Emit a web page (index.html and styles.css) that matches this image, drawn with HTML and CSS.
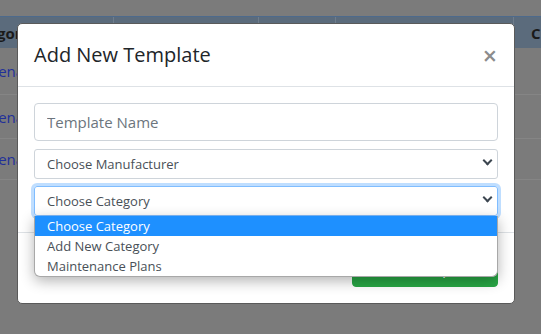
FILE: index.html
```html
<!DOCTYPE html>
<html lang="en">
<head>
    <meta charset="UTF-8">
    <meta name="viewport" content="width=device-width, initial-scale=1.0">
    <title>Templates</title>
    <link rel="stylesheet" href="styles.css">
</head>
<body>

    <div class="page">
        <div class="grid">
            <div class="grid-row grid-head">
                <div class="cell col-a">Category</div>
                <div class="cell col-b">Name</div>
                <div class="cell col-c">Type</div>
                <div class="cell col-d">Manufacturer</div>
                <div class="cell col-e">Created</div>
            </div>
            <div class="grid-row row-1">
                <div class="cell col-a"><a href="#">Maintenance</a></div>
            </div>
            <div class="grid-row row-2">
                <div class="cell col-a"><a href="#">Maintenance</a></div>
            </div>
            <div class="grid-row row-3">
                <div class="cell col-a"><a href="#">Maintenance</a></div>
            </div>
        </div>
    </div>

    <div class="modal">
        <div class="modal-header">
            <h5 class="modal-title">Add New Template</h5>
            <button class="close" type="button">&times;</button>
        </div>
        <div class="modal-body">
            <input class="form-control" type="text" placeholder="Template Name">
            <div class="select">Choose Manufacturer<span class="chev"></span></div>
            <div class="select-wrap">
                <div class="select focused">Choose Category<span class="chev"></span></div>
                <ul class="dropdown">
                    <li class="selected">Choose Category</li>
                    <li>Add New Category</li>
                    <li>Maintenance Plans</li>
                </ul>
            </div>
        </div>
        <div class="modal-footer">
            <button class="btn-success" type="button">Save Template</button>
        </div>
    </div>

</body>
</html>
```

FILE: styles.css
```css
body {
    margin: 0;
    background-color: #7b7b7b;
    font-family: "Open Sans", "Noto Sans", Arial, sans-serif;
    overflow: hidden;
    height: 334px;
}
.page {
    padding-top: 16px;
}
.grid {
    margin-left: -48px;
    width: 640px;
}
.grid-row {
    display: flex;
    border-bottom: 1px solid #858585;
}
.grid-head {
    height: 31px;
    background-color: #5b6b7c;
    border-top: 1px solid #4d6a8c;
    border-bottom: 0;
    color: #1a1a1a;
    font-weight: bold;
    font-size: 15px;
}
.cell {
    box-sizing: border-box;
    padding: 0 12px;
    white-space: nowrap;
    overflow: hidden;
    display: flex;
    align-items: center;
}
.grid-head .cell {
    border-right: 1px solid #6f7d8c;
}
.grid-head .col-a {
    padding-left: 11px;
}
.col-a { width: 162px; padding-left: 6px; }
.col-b { width: 145px; }
.col-c { width: 77px; }
.col-d { width: 178px; }
.col-e { width: 78px; padding-left: 17px; }
.grid-row a {
    color: #22309a;
    text-decoration: none;
    font-size: 15px;
}
.row-1 { height: 46px; }
.row-2 { height: 43px; }
.row-3 { height: 40px; }

.modal {
    position: absolute;
    top: 23px;
    left: 17px;
    width: 496px;
    background-color: #fff;
    border: 1px solid #5a5a5a;
    border-radius: 5px;
    color: #212529;
}
.modal-header {
    display: flex;
    justify-content: space-between;
    align-items: flex-start;
    padding: 16px;
    border-bottom: 1px solid #dee2e6;
}
.modal-title {
    margin: 0;
    font-size: 20px;
    font-weight: 400;
    line-height: 30px;
}
.close {
    border: 0;
    background: none;
    padding: 0;
    margin-top: 3px;
    margin-right: 1px;
    font-family: "Open Sans", sans-serif;
    font-size: 25px;
    line-height: 24px;
    font-weight: 600;
    color: #8c8c8c;
}
.modal-body {
    padding: 16px;
}
.form-control {
    display: block;
    box-sizing: border-box;
    width: 100%;
    height: 38px;
    margin: 0 0 8px 0;
    padding: 6px 12px;
    border: 1px solid #ced4da;
    border-radius: 4px;
    font-family: inherit;
    font-size: 15px;
    color: #495057;
    outline: none;
}
.form-control::placeholder {
    color: #6c757d;
}
.select {
    position: relative;
    box-sizing: border-box;
    height: 30px;
    padding: 0 12px;
    border: 1px solid #ced4da;
    border-radius: 3px;
    font-size: 13px;
    line-height: 28px;
    color: #495057;
    margin-bottom: 7px;
}
.select.focused {
    border-color: #80bdff;
    box-shadow: 0 0 0 3px rgba(0, 123, 255, 0.25);
    margin-bottom: 0;
}
.chev {
    position: absolute;
    right: 6px;
    top: 9px;
    width: 8px;
    height: 8px;
}
.chev::before {
    content: "";
    position: absolute;
    left: 1px;
    top: -2px;
    width: 5px;
    height: 5px;
    border-right: 2px solid #3c4650;
    border-bottom: 2px solid #3c4650;
    transform: rotate(45deg);
}
.select-wrap {
    position: relative;
}
.dropdown {
    position: absolute;
    top: 30px;
    left: 0;
    right: 0;
    margin: 0;
    padding: 0;
    list-style: none;
    background-color: #fff;
    border: 1px solid #a8a8a8;
    border-top: 0;
    border-radius: 0 0 6px 6px;
    box-shadow: 0 4px 14px rgba(0, 0, 0, 0.3);
    z-index: 10;
    overflow: hidden;
}
.dropdown li {
    height: 20px;
    line-height: 20px;
    padding-left: 12px;
    font-size: 13px;
    color: #495057;
}
.dropdown li.selected {
    background-color: #1e90ff;
    color: #fff;
}
.modal-footer {
    display: flex;
    justify-content: flex-end;
    padding: 16px;
    border-top: 1px solid #dee2e6;
}
.btn-success {
    width: 146px;
    height: 38px;
    border: 1px solid #28a745;
    border-radius: 4px;
    background-color: #28a745;
    color: #fff;
    font-family: inherit;
    font-size: 16px;
}
```
